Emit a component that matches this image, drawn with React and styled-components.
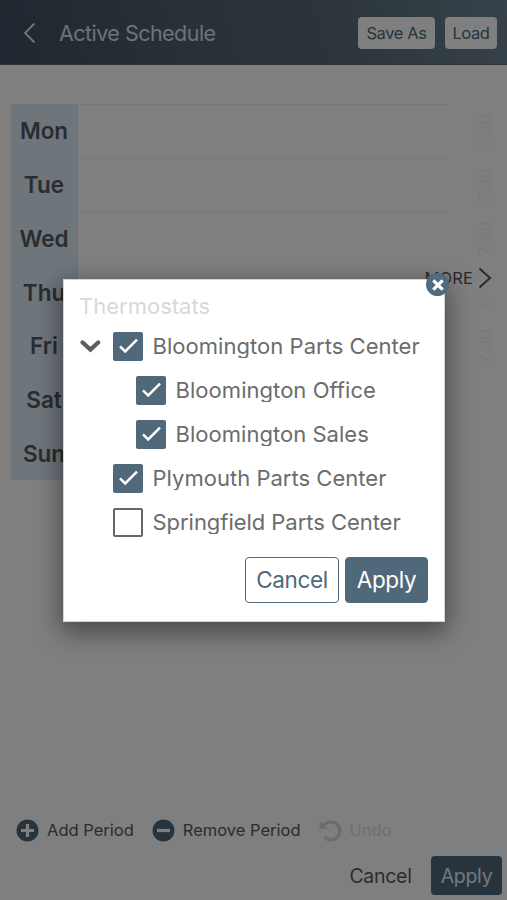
import React, { useState } from 'react'
import styled, { createGlobalStyle } from 'styled-components';

const days = [
  { name: 'Mon', time: '7:30', line: true },
  { name: 'Tue', time: '7:30', line: true },
  { name: 'Wed', time: '7:30', line: true },
  { name: 'Thu', time: '7:30' },
  { name: 'Fri', time: '7:30' },
  { name: 'Sat', time: '' },
  { name: 'Sun', time: '' },
]

const thermostats = [
  { name: 'Bloomington Parts Center', checked: true, open: true, spacing: 0.04 },
  { name: 'Bloomington Office', checked: true, child: true, spacing: 0.05 },
  { name: 'Bloomington Sales', checked: true, child: true, spacing: 0.03 },
  { name: 'Plymouth Parts Center', checked: true, spacing: 0.02 },
  { name: 'Springfield Parts Center', checked: false, spacing: -0.04 },
]

export default function App() {
  const [items, setItems] = useState(thermostats)

  const toggle = (index) => {
    setItems(items.map((item, i) => i === index ? { ...item, checked: !item.checked } : item))
  }

  return (
    <Screen>
      <GlobalStyle />
      <Header>
        <svg width="13" height="22" viewBox="0 0 13 22" fill="none" stroke="#e4e8ea" strokeWidth="1.8">
          <path d="M11.5 1.5L2 11l9.5 9.5" />
        </svg>
        <h1>Active Schedule</h1>
        <HeaderButton $width={77}>Save As</HeaderButton>
        <HeaderButton $width={52}>Load</HeaderButton>
      </Header>

      <Schedule>
        {days.map(day => (
          <DayRow key={day.name}>
            <DayName>{day.name}</DayName>
            <DayTrack $line={day.line} />
            <DayTime>{day.time}</DayTime>
          </DayRow>
        ))}
        <More>
          MORE
          <svg width="14" height="22" viewBox="0 0 14 22" fill="none" stroke="#555" strokeWidth="2">
            <path d="M1.5 1.5L12 11 1.5 20.5" />
          </svg>
        </More>
      </Schedule>

      <Tools>
        <Tool>
          <svg width="23" height="23" viewBox="0 0 23 23">
            <circle cx="11.5" cy="11.5" r="11" fill="#4f697b" />
            <path d="M11.5 5v13M5 11.5h13" stroke="#fff" strokeWidth="3.2" />
          </svg>
          <span>Add Period</span>
        </Tool>
        <Tool>
          <svg width="23" height="23" viewBox="0 0 23 23">
            <circle cx="11.5" cy="11.5" r="11" fill="#4f697b" />
            <path d="M5 11.5h13" stroke="#fff" strokeWidth="3.2" />
          </svg>
          <span>Remove Period</span>
        </Tool>
        <Tool $disabled>
          <svg width="23" height="23" viewBox="0 0 23 23" fill="none">
            <path d="M4.2 7.4A8.9 8.9 0 1 1 5.6 18" stroke="#d8d8d8" strokeWidth="3.4" />
            <path d="M.5 1.5v8.3h8.3z" fill="#d8d8d8" />
          </svg>
          <span>Undo</span>
        </Tool>
      </Tools>

      <Footer>
        <FooterButton $width={79}>Cancel</FooterButton>
        <FooterButton $width={71} $primary>Apply</FooterButton>
      </Footer>

      <Backdrop>
        <Modal>
          <CloseButton>
            <svg width="12" height="12" viewBox="0 0 12 12" stroke="#fff" strokeWidth="3.2">
              <path d="M1.3 1.3l9.4 9.4M10.7 1.3l-9.4 9.4" />
            </svg>
          </CloseButton>
          <h2>Thermostats</h2>
          {items.map((item, i) => (
            <Item key={item.name} $child={item.child} onClick={() => toggle(i)}>
              <Arrow>
                {item.open &&
                  <svg width="21" height="13" viewBox="0 0 21 13" fill="none" stroke="#5e5e5e" strokeWidth="4.2" strokeLinecap="round">
                    <path d="M2.6 2.5L10.4 9.6l7.8-7.1" />
                  </svg>
                }
              </Arrow>
              <Checkbox $checked={item.checked}>
                {item.checked &&
                  <svg width="19" height="15" viewBox="0 0 19 15" fill="none" stroke="#fff" strokeWidth="2.5">
                    <path d="M1 7.4l5.2 5L18 .6" />
                  </svg>
                }
              </Checkbox>
              <Label $spacing={item.spacing}>{item.name}</Label>
            </Item>
          ))}
          <Actions>
            <ModalButton $width={94}>Cancel</ModalButton>
            <ModalButton $width={83} $primary>Apply</ModalButton>
          </Actions>
        </Modal>
      </Backdrop>
    </Screen>
  )
}


const GlobalStyle = createGlobalStyle`
  body{
    margin: 0;
    font-family: Inter, "Liberation Sans", sans-serif;
  }
  *{
    box-sizing: border-box;
  }
  button{
    font-family: inherit;
    padding: 0;
    cursor: pointer;
  }
  svg{
    display: block;
    flex: none;
  }
`;

const Screen = styled.div`
  position: relative;
  display: flex;
  flex-direction: column;
  width: 507px;
  height: 900px;
  overflow: hidden;
  background-color: #fff;
`;

const Header = styled.header`
  display: flex;
  align-items: center;
  height: 65px;
  padding: 1px 10px 0 23px;
  background: linear-gradient(75deg, #3d5060 0%, #52646f 40%, #576a77 65%, #6f8494 100%);
  border-bottom: 1px solid #566470;
  h1{
    flex: 1;
    margin: 1px 0 0 23px;
    font-size: 21.5px;
    font-weight: 400;
    letter-spacing: -0.53px;
    color: #dfe4e7;
  }
`;

const HeaderButton = styled.button`
  width: ${props => props.$width}px;
  height: 32px;
  margin-left: 10px;
  border: none;
  border-radius: 4px;
  background-color: #fff;
  color: #4f697b;
  font-size: 16.5px;
  letter-spacing: -0.4px;
`;

const Schedule = styled.div`
  position: relative;
  display: flex;
  flex-direction: column;
  margin: 39px 0 0 11px;
  height: 376px;
`;

const DayRow = styled.div`
  display: flex;
  flex: 1;
`;

const DayName = styled.div`
  display: flex;
  align-items: center;
  justify-content: center;
  width: 67px;
  padding-right: 1px;
  background-color: #dcebf7;
  color: #55595d;
  font-size: 22.5px;
  font-weight: 600;
`;

const DayTrack = styled.div`
  width: 368px;
  margin-left: 2px;
  border-top: 1px solid ${props => props.$line ? '#f0f0f0' : 'transparent'};
`;

const DayTime = styled.div`
  display: flex;
  align-items: center;
  justify-content: center;
  width: 18px;
  margin-left: 28px;
  writing-mode: vertical-rl;
  transform: rotate(180deg);
  color: #f2f2f2;
  font-size: 16px;
  letter-spacing: 0.5px;
`;

const More = styled.div`
  position: absolute;
  top: 154px;
  right: 15px;
  display: flex;
  align-items: center;
  gap: 5px;
  height: 40px;
  background-color: #fff;
  color: #555;
  font-size: 16.5px;
  letter-spacing: 0.1px;
`;

const Tools = styled.div`
  display: flex;
  align-items: center;
  margin-top: auto;
  height: 32px;
  padding-left: 16px;
  gap: 18px;
`;

const Tool = styled.div`
  display: flex;
  align-items: center;
  gap: 8px;
  color: ${props => props.$disabled ? '#dedede' : '#55595d'};
  font-size: 16.5px;
  white-space: nowrap;
`;

const Footer = styled.div`
  display: flex;
  justify-content: flex-end;
  align-items: center;
  gap: 11px;
  margin-top: 10px;
  padding: 0 5px 5px 0;
`;

const FooterButton = styled.button`
  width: ${props => props.$width}px;
  height: 39px;
  border: none;
  border-radius: 4px;
  background-color: ${props => props.$primary ? '#4f697b' : 'transparent'};
  color: ${props => props.$primary ? '#e8eef2' : '#55595d'};
  font-size: 19.5px;
  letter-spacing: -0.3px;
`;

const Backdrop = styled.div`
  position: absolute;
  inset: 0;
  padding: 279px 0 0 63px;
  background-color: rgba(0,0,0,0.5);
`;

const Modal = styled.div`
  position: relative;
  width: 382px;
  height: 343px;
  padding: 12px 16px 0 16px;
  background-color: #fff;
  border: 1px solid #d4d4d4;
  box-shadow: 0 8px 24px 2px rgba(0,0,0,0.45);
  h2{
    margin: 0 0 3px -1px;
    height: 29px;
    line-height: 29px;
    font-size: 22px;
    font-weight: 400;
    color: #d8d8d8;
  }
`;

const CloseButton = styled.button`
  position: absolute;
  top: -7px;
  right: -5px;
  display: flex;
  align-items: center;
  justify-content: center;
  width: 23px;
  height: 23px;
  border: none;
  border-radius: 50%;
  background-color: #4f6b7e;
`;

const Item = styled.div`
  display: flex;
  align-items: center;
  height: 44px;
  padding-left: ${props => props.$child ? 23 : 0}px;
`;

const Arrow = styled.div`
  width: 33px;
`;

const Checkbox = styled.div`
  display: flex;
  align-items: center;
  justify-content: center;
  flex: none;
  width: 30px;
  height: 29px;
  border: ${props => props.$checked ? 'none' : '2px solid #666'};
  border-radius: 2px;
  background-color: ${props => props.$checked ? '#4f697b' : '#fff'};
`;

/* line box is a little shorter than the descenders */
const Label = styled.div`
  margin-left: 9.5px;
  height: 24px;
  line-height: 25px;
  overflow: hidden;
  white-space: nowrap;
  color: #6c6c6c;
  font-size: 22px;
  letter-spacing: ${props => props.$spacing}px;
`;

const Actions = styled.div`
  display: flex;
  justify-content: flex-end;
  gap: 6px;
  margin-top: 13px;
`;

const ModalButton = styled.button`
  width: ${props => props.$width}px;
  height: 46px;
  padding-bottom: 2px;
  border: 1px solid #4f697b;
  border-radius: 4px;
  background-color: ${props => props.$primary ? '#4f697b' : '#fff'};
  color: ${props => props.$primary ? '#fff' : '#4f697b'};
  font-size: 22.5px;
  letter-spacing: -0.4px;
`;
